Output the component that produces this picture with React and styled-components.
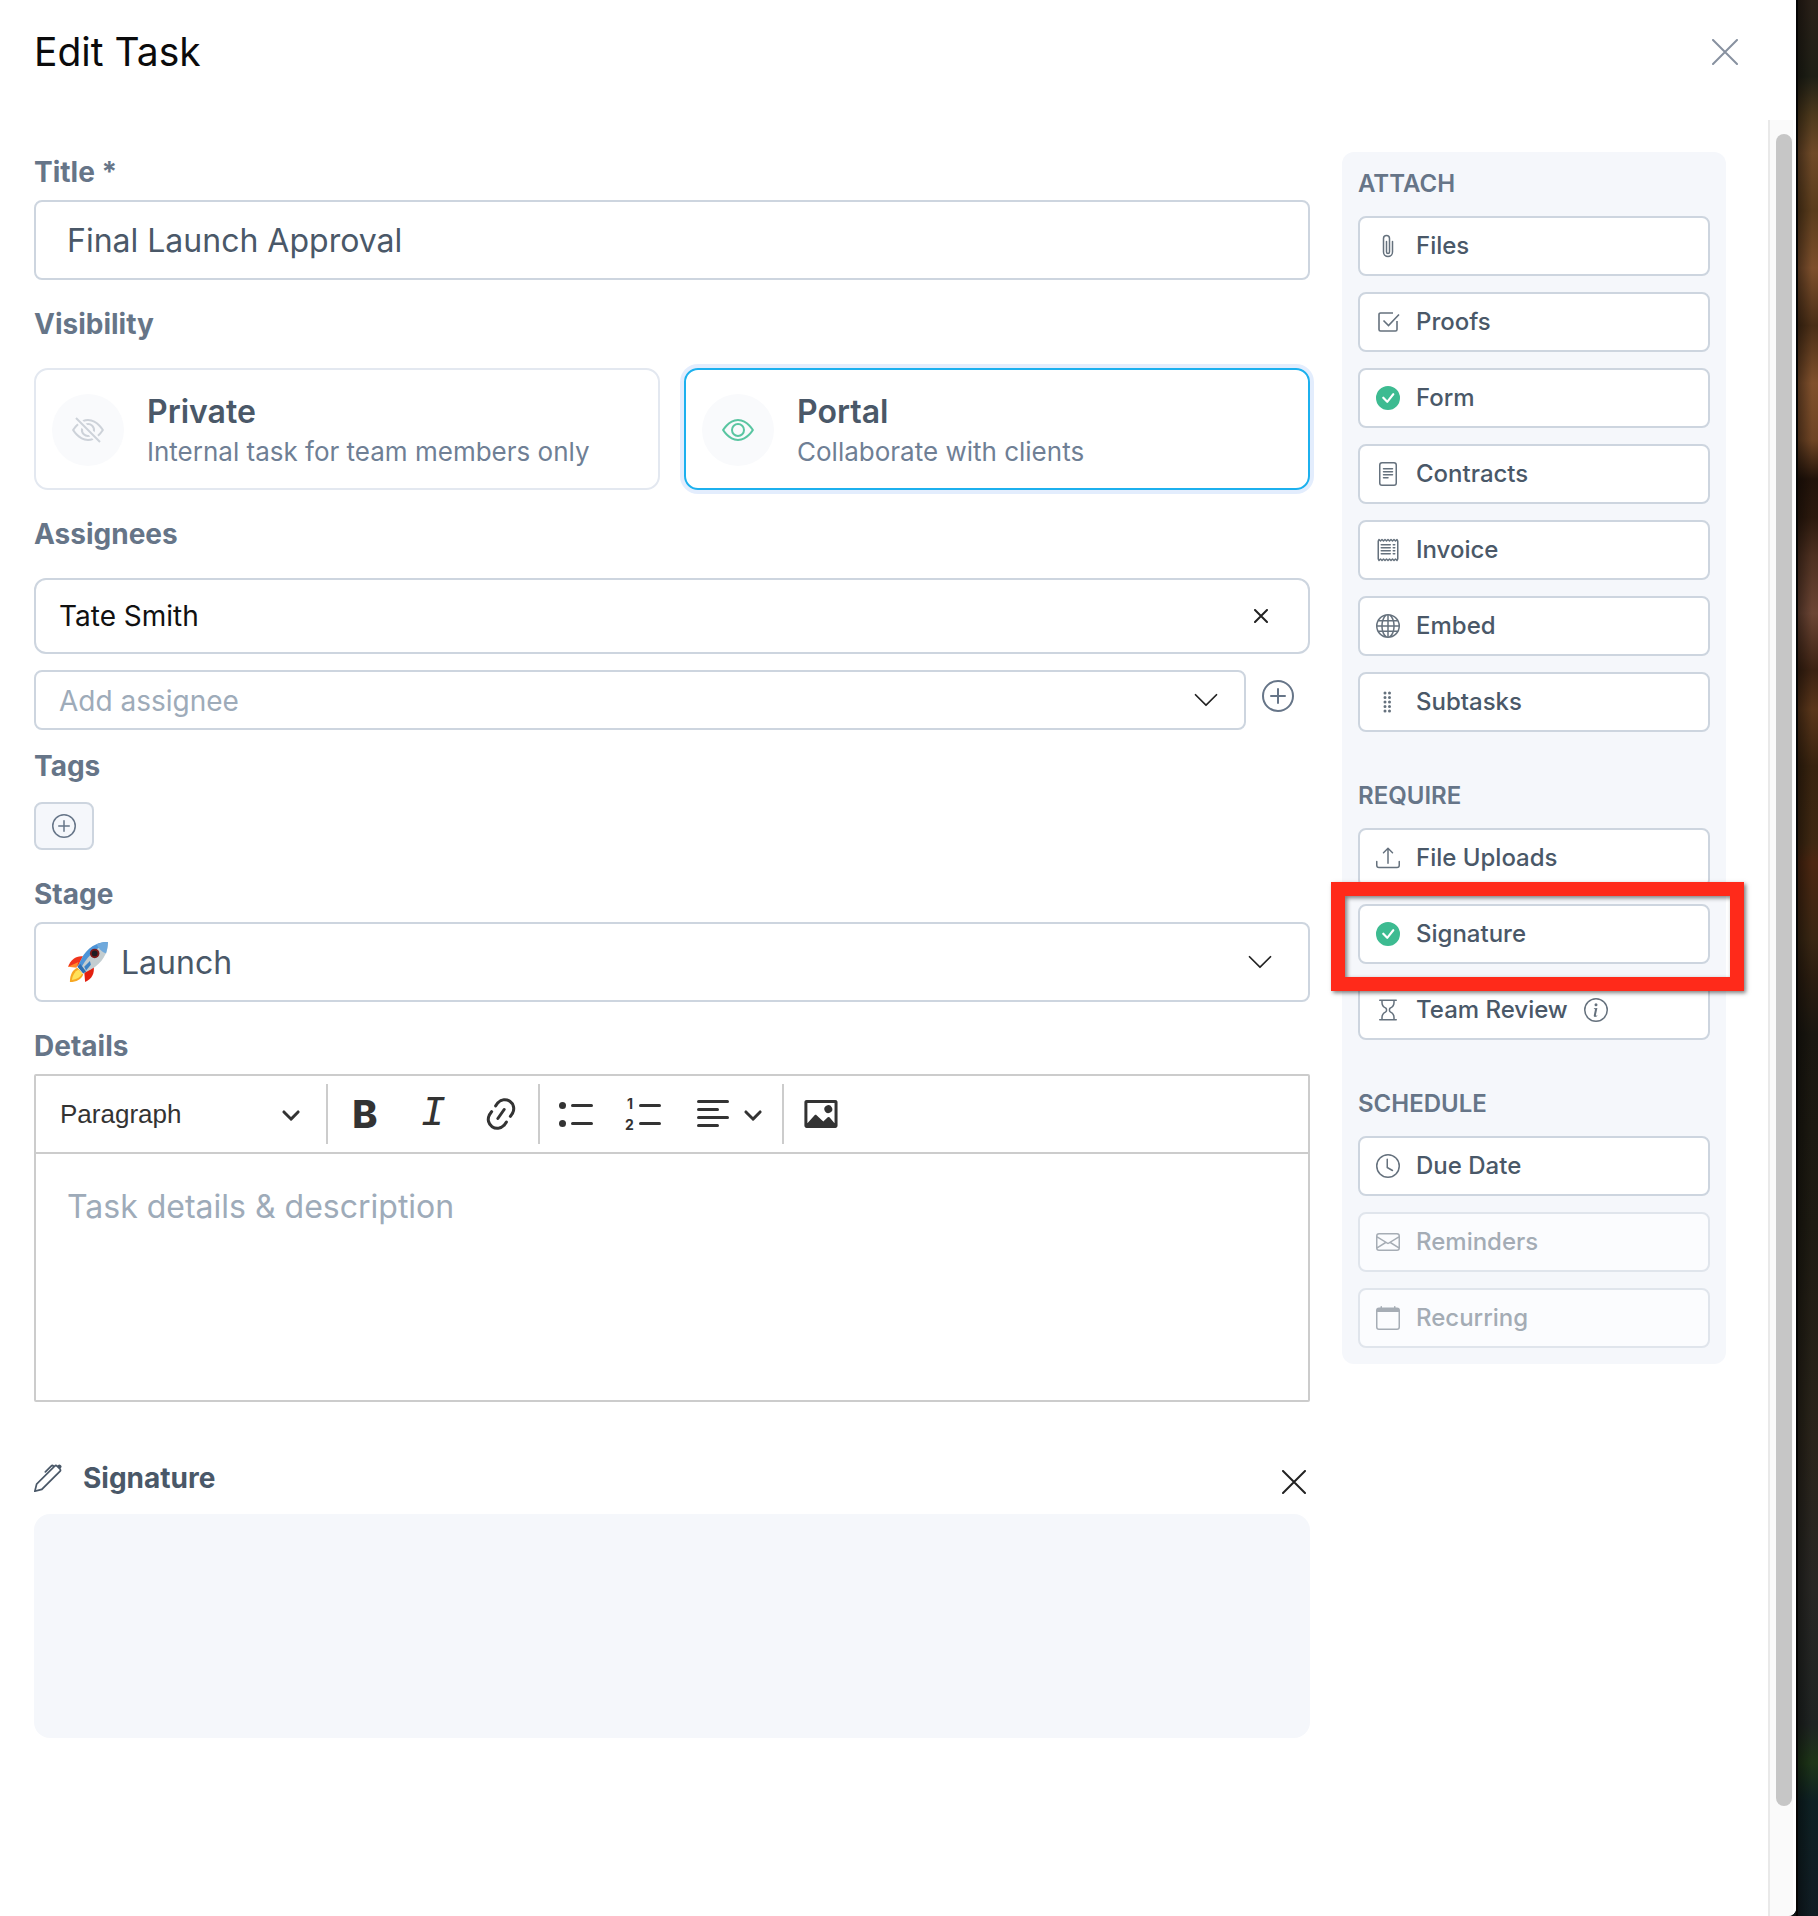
import React, { useState } from "react";
import styled, { createGlobalStyle, css } from "styled-components";
import {
  BsPaperclip,
  BsCheckCircleFill,
  BsFileText,
  BsReceipt,
  BsGlobe,
  BsGripVertical,
  BsUpload,
  BsHourglass,
  BsInfoCircle,
  BsClock,
  BsEnvelope,
  BsCalendar,
  BsEye,
  BsEyeSlash,
  BsPlusCircle,
  BsChevronDown,
  BsPen,
} from "react-icons/bs";

const color = {
  text: "#4a5868",
  label: "#667588",
  muted: "#6f7f95",
  placeholder: "#9eabb9",
  border: "#cdd5df",
  softBorder: "#e3e8f0",
  editorBorder: "#cccccc",
  surface: "#f5f7fb",
  green: "#3dbb91",
  blue: "#1cb0ee",
  red: "#ff2a1a",
};

const GlobalStyle = createGlobalStyle`
  *, *::before, *::after { box-sizing: border-box; }
  body {
    margin: 0;
    font-family: Inter, "Liberation Sans", sans-serif;
    color: ${color.text};
    background: #fff;
  }
  button, input, select, textarea { font: inherit; color: inherit; }
`;

const Screen = styled.div`
  display: grid;
  grid-template-columns: minmax(0, 1fr) 22px;
  min-height: 100vh;
  background: #0d1517;
`;

const Backdrop = styled.div`
  border-left: 2px solid #050504;
  background:
    linear-gradient(90deg, rgba(0, 0, 0, 0.4), transparent 70%),
    linear-gradient(
      180deg,
      #2a2018 0%,
      #1f2016 4%,
      #4d391c 6%,
      #6f4a28 8%,
      #5a3c1c 11%,
      #7d4f2c 14%,
      #4a2e16 17%,
      #80502c 20%,
      #6e4424 23%,
      #22130a 25%,
      #2c190d 27%,
      #4e3020 29%,
      #6c4534 32%,
      #3c2212 35%,
      #5a361a 37%,
      #38230f 40%,
      #3f2812 44%,
      #4c2711 45%,
      #3a2713 49%,
      #2b1d10 51%,
      #1a1710 54%,
      #1e1b12 64%,
      #2a241a 75%,
      #282724 83%,
      #1f2422 90%,
      #1e3618 92%,
      #0e2124 94%,
      #111d24 100%
    );
`;

const Dialog = styled.main`
  display: flex;
  flex-direction: column;
  overflow: hidden;
  background: #fff;
  border-bottom-right-radius: 8px;
`;

const Header = styled.header`
  display: flex;
  align-items: center;
  justify-content: space-between;
  height: 104px;
  margin-bottom: 16px;
  padding: 0 58px 0 34px;
`;

const Heading = styled.h1`
  margin: 0;
  font-size: 39px;
  line-height: 48px;
  font-weight: 400;
  color: #0b0b0c;
`;

const IconButton = styled.button`
  display: inline-flex;
  align-items: center;
  justify-content: center;
  padding: 0;
  border: 0;
  background: none;
  color: ${(p) => p.$color || color.label};
  cursor: pointer;
`;

const Body = styled.div`
  flex: 1;
  display: grid;
  grid-template-columns: minmax(0, 1fr) 28px;
`;

const Columns = styled.div`
  display: grid;
  grid-template-columns: minmax(0, 1fr) 384px;
  align-items: start;
  gap: 32px;
  padding: 32px 42px 32px 34px;
`;

const ScrollTrack = styled.div`
  padding: 14px 0 22px 6px;
  border-left: 2px solid #e9e9e9;
  border-right: 3px solid #fff;
  background: #fafafa;
`;

const ScrollThumb = styled.div`
  width: 16px;
  height: 95%;
  border-radius: 8px;
  background: #c6c6c6;
`;

const Form = styled.form`
  display: flex;
  flex-direction: column;
  gap: 24px;
`;

const Field = styled.div`
  display: flex;
  flex-direction: column;
  gap: ${(p) => (p.$loose ? "24px" : "8px")};
`;

const labelStyle = css`
  font-size: 28px;
  line-height: 40px;
  font-weight: 700;
  color: ${color.label};
`;

const Label = styled.label`
  ${labelStyle}
`;

const Legend = styled.div`
  ${labelStyle}
`;

const TextInput = styled.input`
  width: 100%;
  height: 80px;
  padding: 0 31px;
  border: 2px solid ${color.border};
  border-radius: 8px;
  background: #fff;
  font-size: 32px;
  outline: none;
`;

const Options = styled.div`
  display: grid;
  grid-template-columns: 1fr 1fr;
  gap: 24px;
`;

const Option = styled.label`
  position: relative;
  display: flex;
  align-items: center;
  gap: 23px;
  height: 122px;
  padding: 2px 16px 0;
  border: 2px solid ${(p) => (p.$selected ? color.blue : color.softBorder)};
  border-radius: 14px;
  box-shadow: ${(p) => (p.$selected ? "0 0 0 4px #e3edfd" : "none")};
  cursor: pointer;
`;

const OptionRadio = styled.input`
  position: absolute;
  inset: 0;
  margin: 0;
  opacity: 0;
`;

const OptionIcon = styled.span`
  flex: none;
  display: flex;
  align-items: center;
  justify-content: center;
  width: 72px;
  height: 72px;
  border-radius: 50%;
  background: #f9fafc;
  color: ${(p) => (p.$selected ? "#59c5a1" : "#cdd2d9")};
`;

const OptionText = styled.span`
  display: flex;
  flex-direction: column;
`;

const OptionTitle = styled.span`
  font-size: 32px;
  line-height: 44px;
  font-weight: 600;
`;

const OptionHint = styled.span`
  font-size: 26px;
  line-height: 36px;
  color: ${color.muted};
`;

const Stack = styled.div`
  display: flex;
  flex-direction: column;
  gap: 16px;
`;

const Assignee = styled.div`
  display: flex;
  align-items: center;
  justify-content: space-between;
  height: 76px;
  padding: 0 40px 0 23px;
  border: 2px solid ${color.border};
  border-radius: 12px;
  font-size: 28px;
  color: #111;
`;

const AddRow = styled.div`
  display: grid;
  grid-template-columns: minmax(0, 1fr) 32px;
  align-items: center;
  gap: 16px;
  padding-right: 16px;

  & > button {
    padding-bottom: 8px;
  }
`;

const SelectBox = styled.div`
  display: grid;
  align-items: center;

  & > * {
    grid-area: 1 / 1;
  }
`;

const SelectArrow = styled.span`
  justify-self: end;
  display: flex;
  margin-right: ${(p) => p.$inset}px;
  color: ${(p) => p.$color || "#222"};
  pointer-events: none;
`;

const SelectGlyph = styled.span`
  justify-self: start;
  display: flex;
  margin-left: 34px;
  pointer-events: none;
`;

const Select = styled.select`
  appearance: none;
  width: 100%;
  height: ${(p) => (p.$compact ? "60px" : "80px")};
  padding: ${(p) => (p.$compact ? "2px 64px 0 23px" : "0 64px 0 85px")};
  border: 2px solid ${color.border};
  border-radius: 8px;
  background: #fff;
  font-size: ${(p) => (p.$compact ? "28px" : "32px")};
  color: ${(p) => (p.$compact ? color.placeholder : color.text)};
  outline: none;
`;

const TagButton = styled.button`
  display: flex;
  align-items: center;
  justify-content: center;
  width: 60px;
  height: 48px;
  padding: 0;
  border: 2px solid ${color.border};
  border-radius: 8px;
  background: ${color.surface};
  color: ${color.label};
`;

const Editor = styled.div`
  display: flex;
  flex-direction: column;
  height: 328px;
  border: 2px solid ${color.editorBorder};
  border-radius: 2px;
`;

const Toolbar = styled.div`
  display: flex;
  align-items: center;
  height: 78px;
  border-bottom: 2px solid ${color.editorBorder};
  color: #333;
`;

const StyleSelect = styled.select`
  appearance: none;
  width: 287px;
  height: 60px;
  padding: 0 48px 0 24px;
  border: 0;
  background: none;
  font-family: "Liberation Sans", Arial, sans-serif;
  font-size: 26px;
  outline: none;
`;

const Divider = styled.span`
  width: 2px;
  height: 60px;
  margin: 0 3px;
  background: ${color.editorBorder};
`;

const Tool = styled.button`
  display: flex;
  align-items: center;
  justify-content: center;
  gap: 8px;
  width: ${(p) => (p.$menu ? "100px" : "68px")};
  height: 60px;
  padding: 0;
  border: 0;
  background: none;
`;

const BoldMark = styled.span`
  font-size: 38px;
  line-height: 40px;
  font-weight: 800;
`;

const ItalicMark = styled.span`
  font-family: "Liberation Mono", "Courier New", monospace;
  font-size: 42px;
  line-height: 40px;
  font-style: italic;
`;

const Details = styled.textarea`
  flex: 1;
  width: 100%;
  padding: 31px 31px;
  border: 0;
  background: none;
  font-size: 32px;
  line-height: 44px;
  resize: none;
  outline: none;

  &::placeholder {
    color: ${color.placeholder};
    opacity: 1;
  }
`;

const SignatureHead = styled.div`
  display: flex;
  align-items: center;
  justify-content: space-between;
  height: 68px;
  margin-top: 20px;
  padding: 4px 4px 0 0;
`;

const SignatureTitle = styled.h2`
  display: flex;
  align-items: center;
  gap: 21px;
  margin: 0;
  padding-bottom: 8px;
  font-size: 28px;
  line-height: 40px;
  font-weight: 700;
`;

const SignaturePad = styled.div`
  height: 224px;
  border-radius: 16px;
  background: ${color.surface};
`;

const Sidebar = styled.aside`
  display: flex;
  flex-direction: column;
  gap: 48px;
  padding: 16px;
  border-radius: 12px;
  background: ${color.surface};
`;

const Group = styled.section`
  display: flex;
  flex-direction: column;
  gap: 16px;
`;

const GroupTitle = styled.h3`
  margin: 0;
  font-size: 24px;
  line-height: 32px;
  font-weight: 600;
  color: ${color.label};
`;

const ActionSlot = styled.div`
  position: relative;
`;

const Action = styled.button`
  display: flex;
  align-items: center;
  gap: 16px;
  width: 100%;
  height: 60px;
  padding: 0 16px;
  border: 2px solid ${color.border};
  border-radius: 8px;
  background: #fff;
  font-size: 24px;
  line-height: 32px;
  font-weight: 500;
  text-align: left;

  & > svg {
    flex: none;
    color: ${(p) => (p.$done ? color.green : "#65717d")};
  }
  &:disabled {
    border-color: #e0e5ec;
    background: #fbfcfe;
    color: #a4acb5;
  }
  &:disabled > svg {
    color: #a6adb5;
  }
`;

const Highlight = styled.span`
  position: absolute;
  z-index: 1;
  inset: -22px -34px -27px -27px;
  border: 14px solid ${color.red};
  box-shadow:
    2px 2px 4px rgba(0, 0, 0, 0.5),
    inset 2px 2px 4px rgba(0, 0, 0, 0.5);
  pointer-events: none;
`;

const CrossIcon = ({ size, stroke = 2 }) => (
  <svg width={size} height={size} viewBox={`0 0 ${size} ${size}`} aria-hidden="true">
    <path
      d={`M1 1L${size - 1} ${size - 1}M${size - 1} 1L1 ${size - 1}`}
      fill="none"
      stroke="currentColor"
      strokeWidth={stroke}
      strokeLinecap="round"
    />
  </svg>
);

const ProofIcon = ({ size }) => (
  <svg width={size} height={size} viewBox="0 0 24 24" fill="none" stroke="currentColor" strokeWidth="1.6" aria-hidden="true">
    <path d="M17 3H4.5A1.5 1.5 0 0 0 3 4.5v15A1.5 1.5 0 0 0 4.5 21h15a1.5 1.5 0 0 0 1.5-1.5V11" />
    <path d="M7.5 10.5l5 5L23 4.5" />
  </svg>
);

const CaretIcon = () => (
  <svg width="20" height="20" viewBox="0 0 10 10" fill="currentColor" aria-hidden="true">
    <path d="M.941 4.523a.75.75 0 1 1 1.06-1.06l3.006 3.005 3.005-3.005a.75.75 0 1 1 1.06 1.06l-3.549 3.55a.75.75 0 0 1-1.168-.136L.941 4.523z" />
  </svg>
);

const ToolIcon = ({ children }) => (
  <svg width="40" height="40" viewBox="0 0 20 20" fill="currentColor" aria-hidden="true">
    {children}
  </svg>
);

const RocketIcon = () => (
  <svg width="40" height="40" viewBox="0 0 42 42" aria-hidden="true">
    <path d="M16 15C9 14 3 18 0 26l11-1z" fill="#f0341c" />
    <path d="M27 26c1 7-2 13-9 16l-1-11z" fill="#e3200f" />
    <path d="M0 26l11-5-2 6z" fill="#ff8a2a" />
    <path d="M10 27c-5 2-8 7-8 15 7 0 12-3 14-8z" fill="#f7a823" />
    <path d="M11 29c-4 2-6 6-7 11 5-1 9-3 11-7z" fill="#ffe25a" />
    <path d="M42 0C30 0 20 6 14 18l-4 8 6 7 8-4C36 22 42 12 42 0z" fill="#c3cdd0" />
    <path d="M42 0C30 0 20 6 14 18l-4 8 3 3C18 18 27 8 42 0z" fill="#4c94d8" />
    <path d="M42 0c-4 0-8 1-12 2 2 5 5 8 10 10 1-4 2-8 2-12z" fill="#6fa9dc" />
    <path d="M10 26l6 7 3-2-6-8z" fill="#2f6fb0" />
    <path d="M17 26l6-6 1 4-5 6z" fill="#3b82c4" />
    <circle cx="28" cy="12" r="5" fill="#7c1a1a" />
    <circle cx="28" cy="12" r="3" fill="#1d1c22" />
  </svg>
);

const groups = [
  {
    title: "ATTACH",
    items: [
      { label: "Files", icon: BsPaperclip },
      { label: "Proofs", icon: ProofIcon },
      { label: "Form", icon: BsCheckCircleFill, done: true },
      { label: "Contracts", icon: BsFileText },
      { label: "Invoice", icon: BsReceipt },
      { label: "Embed", icon: BsGlobe },
      { label: "Subtasks", icon: BsGripVertical },
    ],
  },
  {
    title: "REQUIRE",
    items: [
      { label: "File Uploads", icon: BsUpload },
      { label: "Signature", icon: BsCheckCircleFill, done: true, highlighted: true },
      { label: "Team Review", icon: BsHourglass, info: true },
    ],
  },
  {
    title: "SCHEDULE",
    items: [
      { label: "Due Date", icon: BsClock },
      { label: "Reminders", icon: BsEnvelope, disabled: true },
      { label: "Recurring", icon: BsCalendar, disabled: true },
    ],
  },
];

const visibilities = [
  { value: "private", title: "Private", hint: "Internal task for team members only", icon: BsEyeSlash },
  { value: "portal", title: "Portal", hint: "Collaborate with clients", icon: BsEye },
];

export default function App() {
  const [visibility, setVisibility] = useState("portal");

  return (
    <>
      <GlobalStyle />
      <Screen>
        <Dialog>
          <Header>
            <Heading>Edit Task</Heading>
            <IconButton type="button" aria-label="Close" $color="#8791a0">
              <CrossIcon size={26} />
            </IconButton>
          </Header>
          <Body>
            <Columns>
              <Form onSubmit={(e) => e.preventDefault()}>
                <Field>
                  <Label htmlFor="title">Title *</Label>
                  <TextInput id="title" defaultValue="Final Launch Approval" />
                </Field>

                <Field $loose role="radiogroup" aria-labelledby="visibility">
                  <Legend id="visibility">Visibility</Legend>
                  <Options>
                    {visibilities.map(({ value, title, hint, icon: Icon }) => {
                      const selected = visibility === value;
                      return (
                        <Option key={value} $selected={selected}>
                          <OptionRadio
                            type="radio"
                            name="visibility"
                            value={value}
                            checked={selected}
                            onChange={() => setVisibility(value)}
                          />
                          <OptionIcon $selected={selected}>
                            <Icon size={32} />
                          </OptionIcon>
                          <OptionText>
                            <OptionTitle>{title}</OptionTitle>
                            <OptionHint>{hint}</OptionHint>
                          </OptionText>
                        </Option>
                      );
                    })}
                  </Options>
                </Field>

                <Stack>
                  <Field $loose>
                    <Label htmlFor="assignee">Assignees</Label>
                    <Assignee>
                      Tate Smith
                      <IconButton type="button" aria-label="Remove Tate Smith" $color="#222">
                        <CrossIcon size={14} />
                      </IconButton>
                    </Assignee>
                  </Field>
                  <AddRow>
                    <SelectBox>
                      <Select id="assignee" $compact defaultValue="">
                        <option value="">Add assignee</option>
                      </Select>
                      <SelectArrow $inset={26}>
                        <BsChevronDown size={28} />
                      </SelectArrow>
                    </SelectBox>
                    <IconButton type="button" aria-label="Add assignee">
                      <BsPlusCircle size={32} />
                    </IconButton>
                  </AddRow>
                  <Stack>
                    <Legend>Tags</Legend>
                    <TagButton type="button" aria-label="Add tag">
                      <BsPlusCircle size={24} />
                    </TagButton>
                  </Stack>
                </Stack>

                <Field>
                  <Label htmlFor="stage">Stage</Label>
                  <SelectBox>
                    <Select id="stage" defaultValue="launch">
                      <option value="launch">Launch</option>
                    </Select>
                    <SelectGlyph>
                      <RocketIcon />
                    </SelectGlyph>
                    <SelectArrow $inset={36}>
                      <BsChevronDown size={28} />
                    </SelectArrow>
                  </SelectBox>
                </Field>

                <Field>
                  <Label htmlFor="details">Details</Label>
                  <Editor>
                    <Toolbar role="toolbar" aria-label="Formatting">
                      <SelectBox>
                        <StyleSelect aria-label="Text style" defaultValue="p">
                          <option value="p">Paragraph</option>
                        </StyleSelect>
                        <SelectArrow $inset={22} $color="#333">
                          <CaretIcon />
                        </SelectArrow>
                      </SelectBox>
                      <Divider />
                      <Tool type="button" aria-label="Bold">
                        <BoldMark>B</BoldMark>
                      </Tool>
                      <Tool type="button" aria-label="Italic">
                        <ItalicMark>I</ItalicMark>
                      </Tool>
                      <Tool type="button" aria-label="Link">
                        <ToolIcon>
                          <path d="M11.077 15l.991-1.416a.75.75 0 1 1 1.229.86l-1.148 1.64a.748.748 0 0 1-.217.206 5.251 5.251 0 0 1-8.503-5.955.741.741 0 0 1 .12-.274l1.147-1.639a.75.75 0 1 1 1.228.86L4.933 10.7l.006.003a3.75 3.75 0 0 0 6.132 4.294l.006.004zm5.494-5.335a.748.748 0 0 1-.12.274l-1.147 1.639a.75.75 0 1 1-1.228-.86l.86-1.23a3.75 3.75 0 0 0-6.144-4.301l-.86 1.229a.75.75 0 0 1-1.229-.86l1.148-1.64a.748.748 0 0 1 .217-.206 5.251 5.251 0 0 1 8.503 5.955zm-4.563-2.532a.75.75 0 0 1 .184 1.045l-3.155 4.505a.75.75 0 1 1-1.229-.86l3.155-4.506a.75.75 0 0 1 1.045-.184z" />
                        </ToolIcon>
                      </Tool>
                      <Divider />
                      <Tool type="button" aria-label="Bulleted list">
                        <ToolIcon>
                          <circle cx="2.75" cy="5.75" r="1.75" />
                          <circle cx="2.75" cy="14.75" r="1.75" />
                          <rect x="7" y="5" width="11" height="1.5" rx=".75" />
                          <rect x="7" y="14" width="11" height="1.5" rx=".75" />
                        </ToolIcon>
                      </Tool>
                      <Tool type="button" aria-label="Numbered list">
                        <ToolIcon>
                          <text x="1" y="7.5" fontSize="7" fontWeight="700">1</text>
                          <text x="0" y="18" fontSize="7" fontWeight="700">2</text>
                          <rect x="7" y="5" width="11" height="1.5" rx=".75" />
                          <rect x="7" y="14" width="11" height="1.5" rx=".75" />
                        </ToolIcon>
                      </Tool>
                      <Tool type="button" aria-label="Text alignment" $menu>
                        <ToolIcon>
                          <rect x="1" y="3" width="16" height="1.5" rx=".75" />
                          <rect x="1" y="7" width="11" height="1.5" rx=".75" />
                          <rect x="1" y="11" width="16" height="1.5" rx=".75" />
                          <rect x="1" y="15" width="11" height="1.5" rx=".75" />
                        </ToolIcon>
                        <CaretIcon />
                      </Tool>
                      <Divider />
                      <Tool type="button" aria-label="Insert image">
                        <ToolIcon>
                          <path d="M6.91 10.54c.26-.23.64-.21.88.03l3.36 3.14 2.23-2.06a.64.64 0 0 1 .87 0l2.52 2.97V4.5H3.2v10.12l3.71-4.08zm10.27-7.51c.6 0 1.09.47 1.09 1.05v11.84c0 .59-.49 1.06-1.09 1.06H2.79c-.6 0-1.09-.47-1.09-1.06V4.08c0-.58.49-1.05 1.1-1.05h14.38zm-5.22 5.56a1.96 1.96 0 1 1 3.4-1.96 1.96 1.96 0 0 1-3.4 1.96z" />
                        </ToolIcon>
                      </Tool>
                    </Toolbar>
                    <Details id="details" placeholder="Task details &amp; description" />
                  </Editor>
                </Field>

                <section>
                  <SignatureHead>
                    <SignatureTitle>
                      <BsPen size={28} />
                      Signature
                    </SignatureTitle>
                    <IconButton type="button" aria-label="Remove signature" $color="#222">
                      <CrossIcon size={24} />
                    </IconButton>
                  </SignatureHead>
                  <SignaturePad />
                </section>
              </Form>

              <Sidebar>
                {groups.map((group) => (
                  <Group key={group.title}>
                    <GroupTitle>{group.title}</GroupTitle>
                    {group.items.map(({ label, icon: Icon, done, disabled, highlighted, info }) => (
                      <ActionSlot key={label}>
                        <Action type="button" $done={done} disabled={disabled}>
                          <Icon size={24} />
                          {label}
                          {info && <BsInfoCircle size={24} />}
                        </Action>
                        {highlighted && <Highlight />}
                      </ActionSlot>
                    ))}
                  </Group>
                ))}
              </Sidebar>
            </Columns>
            <ScrollTrack aria-hidden="true">
              <ScrollThumb />
            </ScrollTrack>
          </Body>
        </Dialog>
        <Backdrop />
      </Screen>
    </>
  );
}
